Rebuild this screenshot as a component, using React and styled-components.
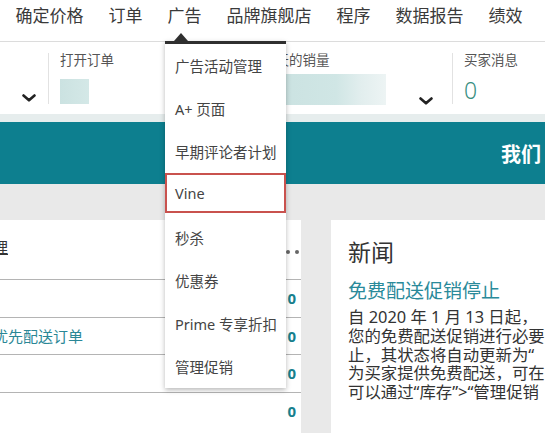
import React from "react";
import styled, { createGlobalStyle } from "styled-components";

const FONT = `"Noto Sans", "Noto Sans CJK SC", sans-serif`;

const Global = createGlobalStyle`
  html, body { margin: 0; padding: 0; background: #ffffff; }
  body { font-family: ${FONT}; overflow: hidden; }
  * { box-sizing: border-box; }
`;

const Page = styled.div`
  width: 545px;
  height: 433px;
  overflow: hidden;
  position: relative;
  background: #ffffff;
`;

const Nav = styled.nav`
  display: flex;
  height: 42px;
  padding-left: 3px;
  border-bottom: 1px solid #dcdcdc;
  background: #fff;
  position: relative;
  z-index: 5;
`;

const NavItem = styled.div`
  position: relative;
  padding: 4px 12.5px 0;
  font-size: 17px;
  line-height: 24px;
  color: #3a3a3a;
  white-space: nowrap;
  height: 41px;
`;

const Dropdown = styled.div`
  position: absolute;
  top: 41px;
  left: 10px;
  width: 121px;
  background: #fff;
  border-top: 3px solid #2f2f2f;
  box-shadow: 0 2px 5px rgba(0, 0, 0, 0.28);
  &::before {
    content: "";
    position: absolute;
    left: 9px;
    top: -11px;
    border-left: 7px solid transparent;
    border-right: 7px solid transparent;
    border-bottom: 8px solid #2f2f2f;
  }
`;

const MenuItem = styled.div`
  height: ${(p) => (p.$selected ? 40 : 43)}px;
  margin-bottom: ${(p) => (p.$selected ? 3 : 0)}px;
  display: flex;
  align-items: center;
  padding-left: 10px;
  font-size: 14.5px;
  color: #444;
  white-space: nowrap;
  box-shadow: ${(p) => (p.$selected ? "inset 0 0 0 2px #c9524e" : "none")};
`;

const Stats = styled.div`
  display: flex;
  height: 80px;
  padding: 11px 0 10px;
  border-bottom: 8px solid #e6eded;
`;

const Cell = styled.div`
  display: flex;
  flex-direction: column;
  width: ${(p) => p.$w}px;
  flex: ${(p) => (p.$w ? "none" : "1")};
  padding-left: ${(p) => p.$pl ?? 11}px;
  border-left: ${(p) => (p.$first ? "none" : "1px solid #e2e2e2")};
`;

const ChevronCell = styled(Cell)`
  align-items: flex-end;
  justify-content: flex-end;
  padding-right: 12px;
  padding-bottom: 2px;
`;

const Label = styled.div`
  font-size: 13.5px;
  line-height: 14px;
  color: #555;
  white-space: nowrap;
`;

const Blur = styled.div`
  margin-top: ${(p) => p.$mt}px;
  width: ${(p) => p.$w}px;
  height: ${(p) => p.$h}px;
  background: ${(p) => p.$bg};
`;

const ValueRow = styled.div`
  display: flex;
  align-items: flex-end;
  justify-content: space-between;
  padding-right: 19px;
`;

const StatValue = styled.div`
  margin-top: 10px;
  font-size: 23px;
  line-height: 26px;
  font-weight: 300;
  color: #3a8f82;
`;

const Chevron = () => (
  <svg width="14" height="8" viewBox="0 0 14 8">
    <path d="M1.5 1.5 L7 6.3 L12.5 1.5" fill="none" stroke="#222" strokeWidth="2.6" strokeLinecap="round" strokeLinejoin="round" />
  </svg>
);

const Banner = styled.div`
  height: 62px;
  background: #0d7f8f;
  display: flex;
  align-items: center;
  padding-left: 501px;
  color: #fff;
  font-size: 20px;
  font-weight: 700;
  white-space: nowrap;
`;

const Content = styled.div`
  display: flex;
  gap: 30px;
  padding-top: 36px;
  background: #e9e9e9;
  height: 300px;
`;

const LeftCard = styled.div`
  flex: none;
  width: 393px;
  margin-left: -92px;
  background: #fff;
`;

const CardHead = styled.div`
  height: 59px;
  display: flex;
  justify-content: space-between;
  align-items: flex-start;
  padding: 16px 2px 0 10px;
`;

const TitleLink = styled.span`
  font-size: 15px;
  line-height: 22px;
  color: #333;
  text-decoration: underline;
  white-space: nowrap;
`;

const DotGroup = styled.span`
  display: flex;
  gap: 5px;
  margin-top: 14px;
`;

const Dot = styled.span`
  width: 4px;
  height: 4px;
  border-radius: 50%;
  background: #666;
`;

const Row = styled.div`
  height: 37.6px;
  border-top: 1px solid #b4b4b4;
  display: flex;
  align-items: center;
  justify-content: space-between;
  padding: 0 5px 0 10px;
`;

const RowText = styled.span`
  font-size: 15px;
  color: #2a8796;
  white-space: nowrap;
`;

const Zero = styled.span`
  font-size: 15px;
  font-weight: 700;
  color: #17808d;
`;

const RightCard = styled.div`
  flex: none;
  width: 280px;
  background: #fff;
  padding: 17px 0 0 17px;
`;

const NewsTitle = styled.div`
  font-size: 23px;
  line-height: 30px;
  color: #333;
`;

const NewsHead = styled.div`
  margin-top: 12px;
  margin-bottom: 5px;
  font-size: 19px;
  line-height: 24px;
  color: #2a8a9a;
  white-space: nowrap;
`;

const NewsLine = styled.div`
  font-size: 16.4px;
  line-height: 18.75px;
  color: #333;
  white-space: nowrap;
`;

const navItems = ["确定价格", "订单", "广告", "品牌旗舰店", "程序", "数据报告", "绩效"];
const menuItems = ["广告活动管理", "A+ 页面", "早期评论者计划", "Vine", "秒杀", "优惠券", "Prime 专享折扣", "管理促销"];
const newsLines = [
  "自 2020 年 1 月 13 日起，",
  "您的免费配送促销进行必要",
  "止，其状态将自动更新为“",
  "为买家提供免费配送，可在",
  "可以通过“库存”>“管理促销",
];

export default function App() {
  return (
    <Page>
      <Global />
      <Nav>
        {navItems.map((n) => (
          <NavItem key={n}>
            {n}
            {n === "广告" && (
              <Dropdown>
                {menuItems.map((m) => (
                  <MenuItem key={m} $selected={m === "Vine"}>{m}</MenuItem>
                ))}
              </Dropdown>
            )}
          </NavItem>
        ))}
      </Nav>
      <Stats>
        <ChevronCell $w={48} $first $pl={0}>
          <Chevron />
        </ChevronCell>
        <Cell $w={200}>
          <Label>打开订单</Label>
          <Blur $mt={12} $w={29} $h={26} $bg="linear-gradient(90deg,#cbe2e1,#d4e8e7)" />
        </Cell>
        <Cell $w={204} $pl={13}>
          <Label>今天的销量</Label>
          <ValueRow>
            <Blur $mt={7} $w={124} $h={31} $bg="linear-gradient(90deg,#c9e1e0 0%,#d0e6e5 60%,#e2eeee 80%,#edf4f4 100%)" />
            <Chevron />
          </ValueRow>
        </Cell>
        <Cell>
          <Label>买家消息</Label>
          <StatValue>0</StatValue>
        </Cell>
      </Stats>
      <Banner>我们</Banner>
      <Content>
        <LeftCard>
          <CardHead>
            <TitleLink>您的订单处理</TitleLink>
            <DotGroup><Dot /><Dot /><Dot /></DotGroup>
          </CardHead>
          <Row><RowText></RowText><Zero>0</Zero></Row>
          <Row><RowText>延迟发货的优先配送订单</RowText><Zero>0</Zero></Row>
          <Row><RowText></RowText><Zero>0</Zero></Row>
          <Row><RowText></RowText><Zero>0</Zero></Row>
        </LeftCard>
        <RightCard>
          <NewsTitle>新闻</NewsTitle>
          <NewsHead>免费配送促销停止</NewsHead>
          {newsLines.map((l) => (
            <NewsLine key={l}>{l}</NewsLine>
          ))}
        </RightCard>
      </Content>
    </Page>
  );
}
